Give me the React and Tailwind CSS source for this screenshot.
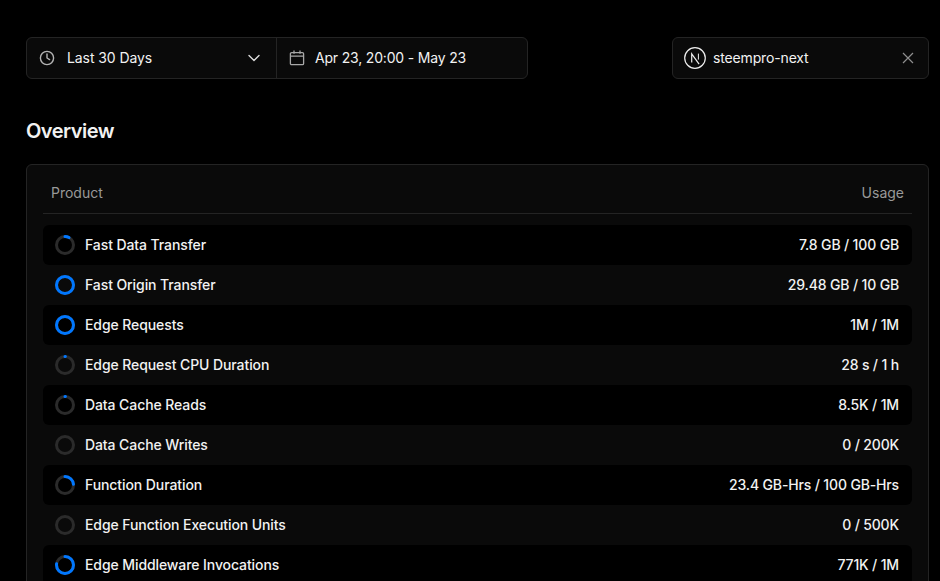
import React from "react";

const rows = [
  ["Fast Data Transfer", "7.8 GB / 100 GB", 7.8],
  ["Fast Origin Transfer", "29.48 GB / 10 GB", 100],
  ["Edge Requests", "1M / 1M", 100],
  ["Edge Request CPU Duration", "28 s / 1 h", 0.78],
  ["Data Cache Reads", "8.5K / 1M", 0.85],
  ["Data Cache Writes", "0 / 200K", 0],
  ["Function Duration", "23.4 GB-Hrs / 100 GB-Hrs", 23.4],
  ["Edge Function Execution Units", "0 / 500K", 0],
  ["Edge Middleware Invocations", "771K / 1M", 77.1],
];

function Ring({ pct }) {
  const r = 8.5;
  const c = 2 * Math.PI * r;
  return (
    <svg width="20" height="20" viewBox="0 0 20 20" className="shrink-0 -rotate-90">
      <circle cx="10" cy="10" r={r} fill="none" stroke="#2b2b2b" strokeWidth="3" />
      {pct > 0 && (
        <circle
          cx="10"
          cy="10"
          r={r}
          fill="none"
          stroke="#0077ff"
          strokeWidth="3"
          strokeLinecap="round"
          strokeDasharray={`${(pct / 100) * c} ${c}`}
        />
      )}
    </svg>
  );
}

function Clock() {
  return (
    <svg width="16" height="16" viewBox="0 0 16 16" fill="none" stroke="#b4b4b4" strokeWidth="1.4" className="shrink-0">
      <circle cx="8" cy="8" r="6.6" />
      <path d="M8 4v4l2.6 1.6" strokeLinecap="round" strokeLinejoin="round" />
    </svg>
  );
}

function Calendar() {
  return (
    <svg width="16" height="16" viewBox="0 0 16 16" fill="none" stroke="#a8a8a8" strokeWidth="1.3" className="shrink-0">
      <rect x="1.4" y="2.6" width="13.2" height="12" rx="1.2" />
      <path d="M1.4 6.2h13.2M5 0.6v3.2M11 0.6v3.2" />
    </svg>
  );
}

function Chevron() {
  return (
    <svg width="16" height="16" viewBox="0 0 16 16" fill="none" stroke="#dcdcdc" strokeWidth="1.4" className="shrink-0">
      <path d="M3 5.6l5 5 5-5" strokeLinecap="round" strokeLinejoin="round" />
    </svg>
  );
}

function Close() {
  return (
    <svg width="12" height="12" viewBox="0 0 12 12" fill="none" stroke="#8f8f8f" strokeWidth="1.2" className="shrink-0">
      <path d="M1 1l10 10M11 1L1 11" />
    </svg>
  );
}

function NextLogo() {
  return (
    <svg width="22" height="22" viewBox="0 0 22 22" fill="none" className="shrink-0">
      <circle cx="11" cy="11" r="10.3" stroke="#ededed" strokeWidth="1.2" />
      <path d="M7.7 15.5V6.8l7.4 10.4" stroke="#ededed" strokeWidth="1.2" />
      <path d="M14.4 6.6v6" stroke="#ededed" strokeWidth="1" />
    </svg>
  );
}

export default function App() {
  return (
    <div className="h-[581px] w-[940px] overflow-hidden bg-black pl-[26px] pr-[11px] pt-[37px] font-['Inter',sans-serif] text-[#f2f2f2]">
      <div className="flex items-start justify-between">
        <div className="flex h-[42px] w-[502px] rounded-md border border-[#242424] bg-[#0a0a0a] text-sm">
          <div className="flex w-[250px] items-center border-r border-[#242424] pl-[12px] pr-[14px]">
            <Clock />
            <span className="ml-[12px] flex-1 tracking-[-0.08px]">Last 30 Days</span>
            <Chevron />
          </div>
          <div className="flex flex-1 items-center pl-[12px]">
            <Calendar />
            <span className="ml-[10px] tracking-[-0.18px]">Apr 23, 20:00 - May 23</span>
          </div>
        </div>
        <div className="flex h-[42px] w-[257px] items-center rounded-md border border-[#242424] bg-[#0a0a0a] pl-[11px] pr-[14px] text-sm">
          <NextLogo />
          <span className="ml-[7px] flex-1 tracking-[-0.15px]">steempro-next</span>
          <Close />
        </div>
      </div>

      <h2 className="mt-[38px] text-xl leading-[28px] font-semibold tracking-[-0.5px]">Overview</h2>

      <div className="mt-[19px] rounded-md border border-[#242424] bg-[#0a0a0a] px-4 pb-4">
        <div className="flex h-[49px] items-center justify-between border-b border-[#242424] px-2 pt-[7px] text-sm text-[#999999]">
          <span>Product</span>
          <span>Usage</span>
        </div>
        <div className="mt-[11px] flex flex-col">
          {rows.map(([name, usage, pct], i) => (
            <div
              key={name}
              className={`flex h-10 shrink-0 items-center justify-between rounded-md pl-3 pr-[13px] text-sm ${i % 2 === 0 ? "bg-black" : ""}`}
            >
              <div className="flex items-center gap-[10px]">
                <Ring pct={pct} />
                <span className="font-medium tracking-[-0.09px]">{name}</span>
              </div>
              <span className="font-medium tracking-[-0.15px]">{usage}</span>
            </div>
          ))}
        </div>
      </div>
    </div>
  );
}
